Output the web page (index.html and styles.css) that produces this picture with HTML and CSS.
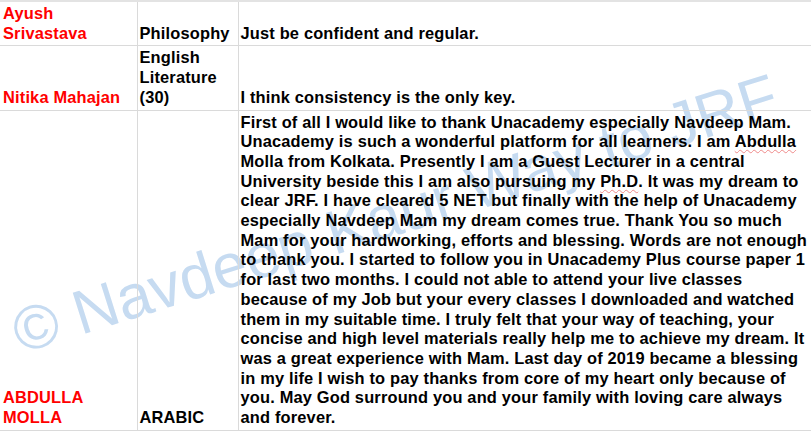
FILE: index.html
```html
<!DOCTYPE html>
<html lang="en">
<head>
<meta charset="utf-8">
<title>Testimonials</title>
<link rel="stylesheet" href="styles.css">
</head>
<body>
<div class="page">
  <div class="watermark">© Navdeep Kaur Way to JRF</div>
  <table class="sheet">
    <colgroup>
      <col class="c-name">
      <col class="c-subject">
      <col class="c-text">
    </colgroup>
    <tbody>
      <tr class="r1">
        <td class="name">Ayush Srivastava</td>
        <td>Philosophy</td>
        <td>Just be confident and regular.</td>
      </tr>
      <tr>
        <td class="name">Nitika Mahajan</td>
        <td>English Literature (30)</td>
        <td>I think consistency is the only key.</td>
      </tr>
      <tr>
        <td class="name">ABDULLA MOLLA</td>
        <td>ARABIC</td>
        <td>First of all I would like to thank Unacademy especially Navdeep Mam. Unacademy is such a wonderful platform for all learners. I am <span class="spell">Abdulla</span> Molla from Kolkata. Presently I am a Guest Lecturer in a central University beside this I am also pursuing my <span class="spell">Ph.D</span>. It was my dream to clear JRF. I have cleared 5 NET but finally with the help of Unacademy especially Navdeep Mam my dream comes true. Thank You so much Mam for your hardworking, efforts and blessing. Words are not enough to thank you. I started to follow you in Unacademy Plus course paper 1 for last two months. I could not able to attend your live classes because of my Job but your every classes I downloaded and watched them in my suitable time. I truly felt that your way of teaching, your concise and high level materials really help me to achieve my dream. It was a great experience with Mam. Last day of 2019 became a blessing in my life I wish to pay thanks from core of my heart only because of you. May God surround you and your family with loving care always and forever.</td>
      </tr>
    </tbody>
  </table>
</div>
</body>
</html>
```

FILE: styles.css
```css
html, body {
  margin: 0;
  padding: 0;
  background: #ffffff;
}

.page {
  position: relative;
  width: 811px;
  height: 431px;
  overflow: hidden;
  font-family: "Liberation Sans", Arial, sans-serif;
}

.watermark {
  position: absolute;
  left: 395px;
  top: 214px;
  transform: translate(-50%, -50%) rotate(-17.5deg);
  white-space: nowrap;
  font-family: "Liberation Sans", Arial, sans-serif;
  font-size: 62px;
  line-height: 1;
  color: #c6dbf1;
}

.sheet {
  position: relative;
  width: 811px;
  table-layout: fixed;
  border-collapse: collapse;
  font-size: 16.4px;
  line-height: 19.7px;
  letter-spacing: 0.18px;
  font-weight: bold;
  color: #000000;
}

.c-name { width: 137px; }
.c-subject { width: 101px; }
.c-text { width: 573px; }

.sheet td {
  vertical-align: bottom;
  padding: 2px 2px 2px 2px;
  border: 1px solid #dadada;
  background: transparent;
}

.sheet td:first-child {
  border-left: none;
  padding-left: 3px;
}

.sheet tr.r1 td {
  border-top: 2px solid #e3e3e3;
}

.name {
  color: #ff0000;
}

.spell {
  text-decoration: underline wavy #ef8a8a;
  text-decoration-thickness: 1px;
  text-underline-offset: 2px;
}
```
